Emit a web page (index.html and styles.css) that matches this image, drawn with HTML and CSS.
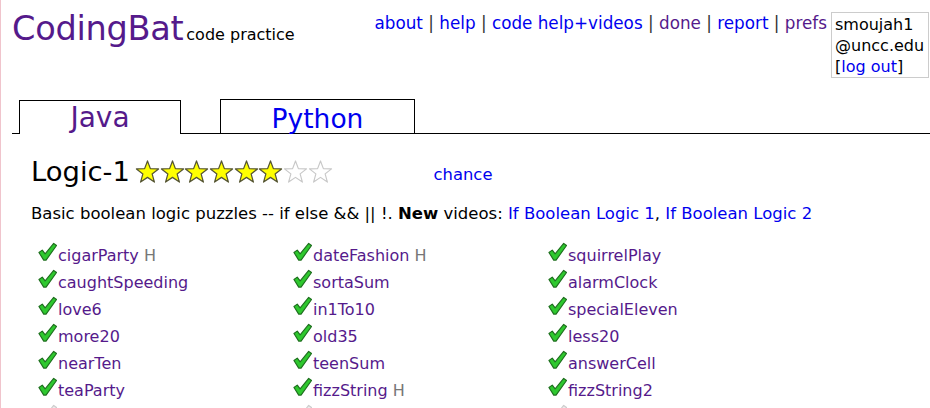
FILE: index.html
```html
<!DOCTYPE html>
<html>
<head>
<meta charset="utf-8">
<link rel="stylesheet" href="styles.css">
</head>
<body>
<div class="page">
  <div class="header">
    <div class="brand"><a class="logo">CodingBat</a><span class="tagline">code practice</span></div>
    <div class="right">
      <div class="nav">
        <a class="lnk">about</a> <span class="sep">|</span>
        <a class="lnk">help</a> <span class="sep">|</span>
        <a class="lnk">code help+videos</a> <span class="sep">|</span>
        <a class="vis">done</a> <span class="sep">|</span>
        <a class="lnk">report</a> <span class="sep">|</span>
        <a class="vis">prefs</a>
      </div>
      <div class="login">
        <div>smoujah1</div>
        <div>@uncc.edu</div>
        <div class="logout">[<a class="lnk">log out</a>]</div>
      </div>
    </div>
  </div>

  <div class="tabs">
    <div class="tab sel java"><a class="vis">Java</a></div>
    <div class="tab python"><a class="lnk">Python</a></div>
  </div>

  <div class="content">
    <div class="titlerow">
      <span class="title">Logic-1</span>
      <span class="stars">
        <svg class="star" viewBox="0 0 26 25"><polygon class="on" points="13,1.5 16,9.5 24.5,9.8 17.8,15 20.2,23.5 13,18.6 5.8,23.5 8.2,15 1.5,9.8 10,9.5"/></svg><svg class="star" viewBox="0 0 26 25"><polygon class="on" points="13,1.5 16,9.5 24.5,9.8 17.8,15 20.2,23.5 13,18.6 5.8,23.5 8.2,15 1.5,9.8 10,9.5"/></svg><svg class="star" viewBox="0 0 26 25"><polygon class="on" points="13,1.5 16,9.5 24.5,9.8 17.8,15 20.2,23.5 13,18.6 5.8,23.5 8.2,15 1.5,9.8 10,9.5"/></svg><svg class="star" viewBox="0 0 26 25"><polygon class="on" points="13,1.5 16,9.5 24.5,9.8 17.8,15 20.2,23.5 13,18.6 5.8,23.5 8.2,15 1.5,9.8 10,9.5"/></svg><svg class="star" viewBox="0 0 26 25"><polygon class="on" points="13,1.5 16,9.5 24.5,9.8 17.8,15 20.2,23.5 13,18.6 5.8,23.5 8.2,15 1.5,9.8 10,9.5"/></svg><svg class="star" viewBox="0 0 26 25"><polygon class="on" points="13,1.5 16,9.5 24.5,9.8 17.8,15 20.2,23.5 13,18.6 5.8,23.5 8.2,15 1.5,9.8 10,9.5"/></svg><svg class="star" viewBox="0 0 26 25"><polygon class="off" points="13,1.5 16,9.5 24.5,9.8 17.8,15 20.2,23.5 13,18.6 5.8,23.5 8.2,15 1.5,9.8 10,9.5"/></svg><svg class="star" viewBox="0 0 26 25"><polygon class="off" points="13,1.5 16,9.5 24.5,9.8 17.8,15 20.2,23.5 13,18.6 5.8,23.5 8.2,15 1.5,9.8 10,9.5"/></svg>
      </span>
      <a class="lnk chance">chance</a>
    </div>

    <p class="desc">Basic boolean logic puzzles -- if else &amp;&amp; || !. <b>New</b> videos: <a class="lnk">If Boolean Logic 1</a>, <a class="lnk">If Boolean Logic 2</a></p>

    <div class="grid">
      <div class="item"><svg class="chk" viewBox="0 0 20 20"><polygon points="1,10.5 4.5,8 7.5,12 16.5,1 19.5,3.2 8.5,18.5 6,18.5"/></svg><a class="vis">cigarParty</a> <span class="h">H</span></div>
      <div class="item"><svg class="chk" viewBox="0 0 20 20"><polygon points="1,10.5 4.5,8 7.5,12 16.5,1 19.5,3.2 8.5,18.5 6,18.5"/></svg><a class="vis">dateFashion</a> <span class="h">H</span></div>
      <div class="item"><svg class="chk" viewBox="0 0 20 20"><polygon points="1,10.5 4.5,8 7.5,12 16.5,1 19.5,3.2 8.5,18.5 6,18.5"/></svg><a class="vis">squirrelPlay</a></div>

      <div class="item"><svg class="chk" viewBox="0 0 20 20"><polygon points="1,10.5 4.5,8 7.5,12 16.5,1 19.5,3.2 8.5,18.5 6,18.5"/></svg><a class="vis">caughtSpeeding</a></div>
      <div class="item"><svg class="chk" viewBox="0 0 20 20"><polygon points="1,10.5 4.5,8 7.5,12 16.5,1 19.5,3.2 8.5,18.5 6,18.5"/></svg><a class="vis">sortaSum</a></div>
      <div class="item"><svg class="chk" viewBox="0 0 20 20"><polygon points="1,10.5 4.5,8 7.5,12 16.5,1 19.5,3.2 8.5,18.5 6,18.5"/></svg><a class="vis">alarmClock</a></div>

      <div class="item"><svg class="chk" viewBox="0 0 20 20"><polygon points="1,10.5 4.5,8 7.5,12 16.5,1 19.5,3.2 8.5,18.5 6,18.5"/></svg><a class="vis">love6</a></div>
      <div class="item"><svg class="chk" viewBox="0 0 20 20"><polygon points="1,10.5 4.5,8 7.5,12 16.5,1 19.5,3.2 8.5,18.5 6,18.5"/></svg><a class="vis">in1To10</a></div>
      <div class="item"><svg class="chk" viewBox="0 0 20 20"><polygon points="1,10.5 4.5,8 7.5,12 16.5,1 19.5,3.2 8.5,18.5 6,18.5"/></svg><a class="vis">specialEleven</a></div>

      <div class="item"><svg class="chk" viewBox="0 0 20 20"><polygon points="1,10.5 4.5,8 7.5,12 16.5,1 19.5,3.2 8.5,18.5 6,18.5"/></svg><a class="vis">more20</a></div>
      <div class="item"><svg class="chk" viewBox="0 0 20 20"><polygon points="1,10.5 4.5,8 7.5,12 16.5,1 19.5,3.2 8.5,18.5 6,18.5"/></svg><a class="vis">old35</a></div>
      <div class="item"><svg class="chk" viewBox="0 0 20 20"><polygon points="1,10.5 4.5,8 7.5,12 16.5,1 19.5,3.2 8.5,18.5 6,18.5"/></svg><a class="vis">less20</a></div>

      <div class="item"><svg class="chk" viewBox="0 0 20 20"><polygon points="1,10.5 4.5,8 7.5,12 16.5,1 19.5,3.2 8.5,18.5 6,18.5"/></svg><a class="vis">nearTen</a></div>
      <div class="item"><svg class="chk" viewBox="0 0 20 20"><polygon points="1,10.5 4.5,8 7.5,12 16.5,1 19.5,3.2 8.5,18.5 6,18.5"/></svg><a class="vis">teenSum</a></div>
      <div class="item"><svg class="chk" viewBox="0 0 20 20"><polygon points="1,10.5 4.5,8 7.5,12 16.5,1 19.5,3.2 8.5,18.5 6,18.5"/></svg><a class="vis">answerCell</a></div>

      <div class="item"><svg class="chk" viewBox="0 0 20 20"><polygon points="1,10.5 4.5,8 7.5,12 16.5,1 19.5,3.2 8.5,18.5 6,18.5"/></svg><a class="vis">teaParty</a></div>
      <div class="item"><svg class="chk" viewBox="0 0 20 20"><polygon points="1,10.5 4.5,8 7.5,12 16.5,1 19.5,3.2 8.5,18.5 6,18.5"/></svg><a class="vis">fizzString</a> <span class="h">H</span></div>
      <div class="item"><svg class="chk" viewBox="0 0 20 20"><polygon points="1,10.5 4.5,8 7.5,12 16.5,1 19.5,3.2 8.5,18.5 6,18.5"/></svg><a class="vis">fizzString2</a></div>

      <div class="item"><svg class="chk gray" viewBox="0 0 20 20"><polygon points="1,10.5 4.5,8 7.5,12 16.5,1 19.5,3.2 8.5,18.5 6,18.5"/></svg></div>
      <div class="item"><svg class="chk gray" viewBox="0 0 20 20"><polygon points="1,10.5 4.5,8 7.5,12 16.5,1 19.5,3.2 8.5,18.5 6,18.5"/></svg></div>
      <div class="item"><svg class="chk gray" viewBox="0 0 20 20"><polygon points="1,10.5 4.5,8 7.5,12 16.5,1 19.5,3.2 8.5,18.5 6,18.5"/></svg></div>
    </div>
  </div>
</div>
</body>
</html>
```

FILE: styles.css
```css
html, body {
  margin: 0;
  padding: 0;
  background: #fff;
}
body {
  font-family: "DejaVu Sans", Verdana, sans-serif;
  color: #000;
  overflow: hidden;
  height: 408px;
}
.page {
  border-left: 1px solid #f0c4cc;
  height: 408px;
  overflow: hidden;
  padding-left: 11px;
}
a { text-decoration: none; cursor: pointer; }
.lnk { color: #0000ee; }
.vis { color: #551a8b; }

.header {
  display: flex;
  justify-content: space-between;
  align-items: flex-start;
}
.brand {
  padding-top: 9px;
  white-space: nowrap;
}
.logo {
  color: #551a8b;
  font-size: 33.6px;
  letter-spacing: -0.3px;
}
.tagline {
  font-size: 16px;
  margin-left: 3px;
}
.right {
  display: flex;
  align-items: flex-start;
  gap: 4px;
  padding-top: 12px;
  padding-right: 1px;
}
.nav {
  font-size: 16.8px;
  white-space: nowrap;
  padding-top: 1px;
}
.sep { color: #333; }
.login {
  border: 1px solid #cccccc;
  font-size: 16px;
  line-height: 21px;
  padding: 1px 3px 0 3px;
  width: 90px;
}

.tabs {
  display: flex;
  align-items: flex-end;
  margin-top: 21px;
  padding-left: 7px;
  gap: 39px;
  border-bottom: 1px solid #000;
  height: 34px;
}
.tab {
  border: 1px solid #000;
  border-bottom: none;
  text-align: center;
  background: #fff;
  box-sizing: border-box;
}
.tab.java {
  width: 162px;
  height: 34px;
  font-size: 28px;
  line-height: 34px;
  margin-bottom: -1px;
}
.tab.python {
  width: 195px;
  height: 34px;
  font-size: 26.5px;
  line-height: 38px;
}

.content {
  padding-left: 19px;
}
.titlerow {
  display: flex;
  align-items: center;
  height: 30px;
  margin-top: 22px;
}
.title {
  font-size: 27.4px;
}
.stars {
  display: flex;
  margin-left: 5px;
}
.star {
  width: 25px;
  height: 25px;
  margin-right: -0.3px;
}
.star .on {
  fill: #ffff00;
  stroke: #555533;
  stroke-width: 1.3;
  stroke-linejoin: round;
}
.star .off {
  fill: #fff;
  stroke: #c8c8c8;
  stroke-width: 1.2;
  stroke-linejoin: round;
}
.chance {
  font-size: 16.4px;
  margin-left: 101px;
  margin-top: 6px;
}
.desc {
  font-size: 16.5px;
  margin: 18px 0 19px 0;
}

.grid {
  display: grid;
  grid-template-columns: 255px 255px 255px;
  grid-auto-rows: 27px;
  padding-left: 7px;
}
.item {
  font-size: 16px;
  white-space: nowrap;
  line-height: 27px;
}
.chk {
  width: 19px;
  height: 20px;
  vertical-align: -1px;
  margin-right: 1px;
}
.chk polygon {
  fill: #2ec82e;
  stroke: #1d6e1d;
  stroke-width: 1.2;
  stroke-linejoin: round;
}
.chk.gray polygon {
  fill: #eeeeee;
  stroke: #cccccc;
}
.h { color: #777; }
```
